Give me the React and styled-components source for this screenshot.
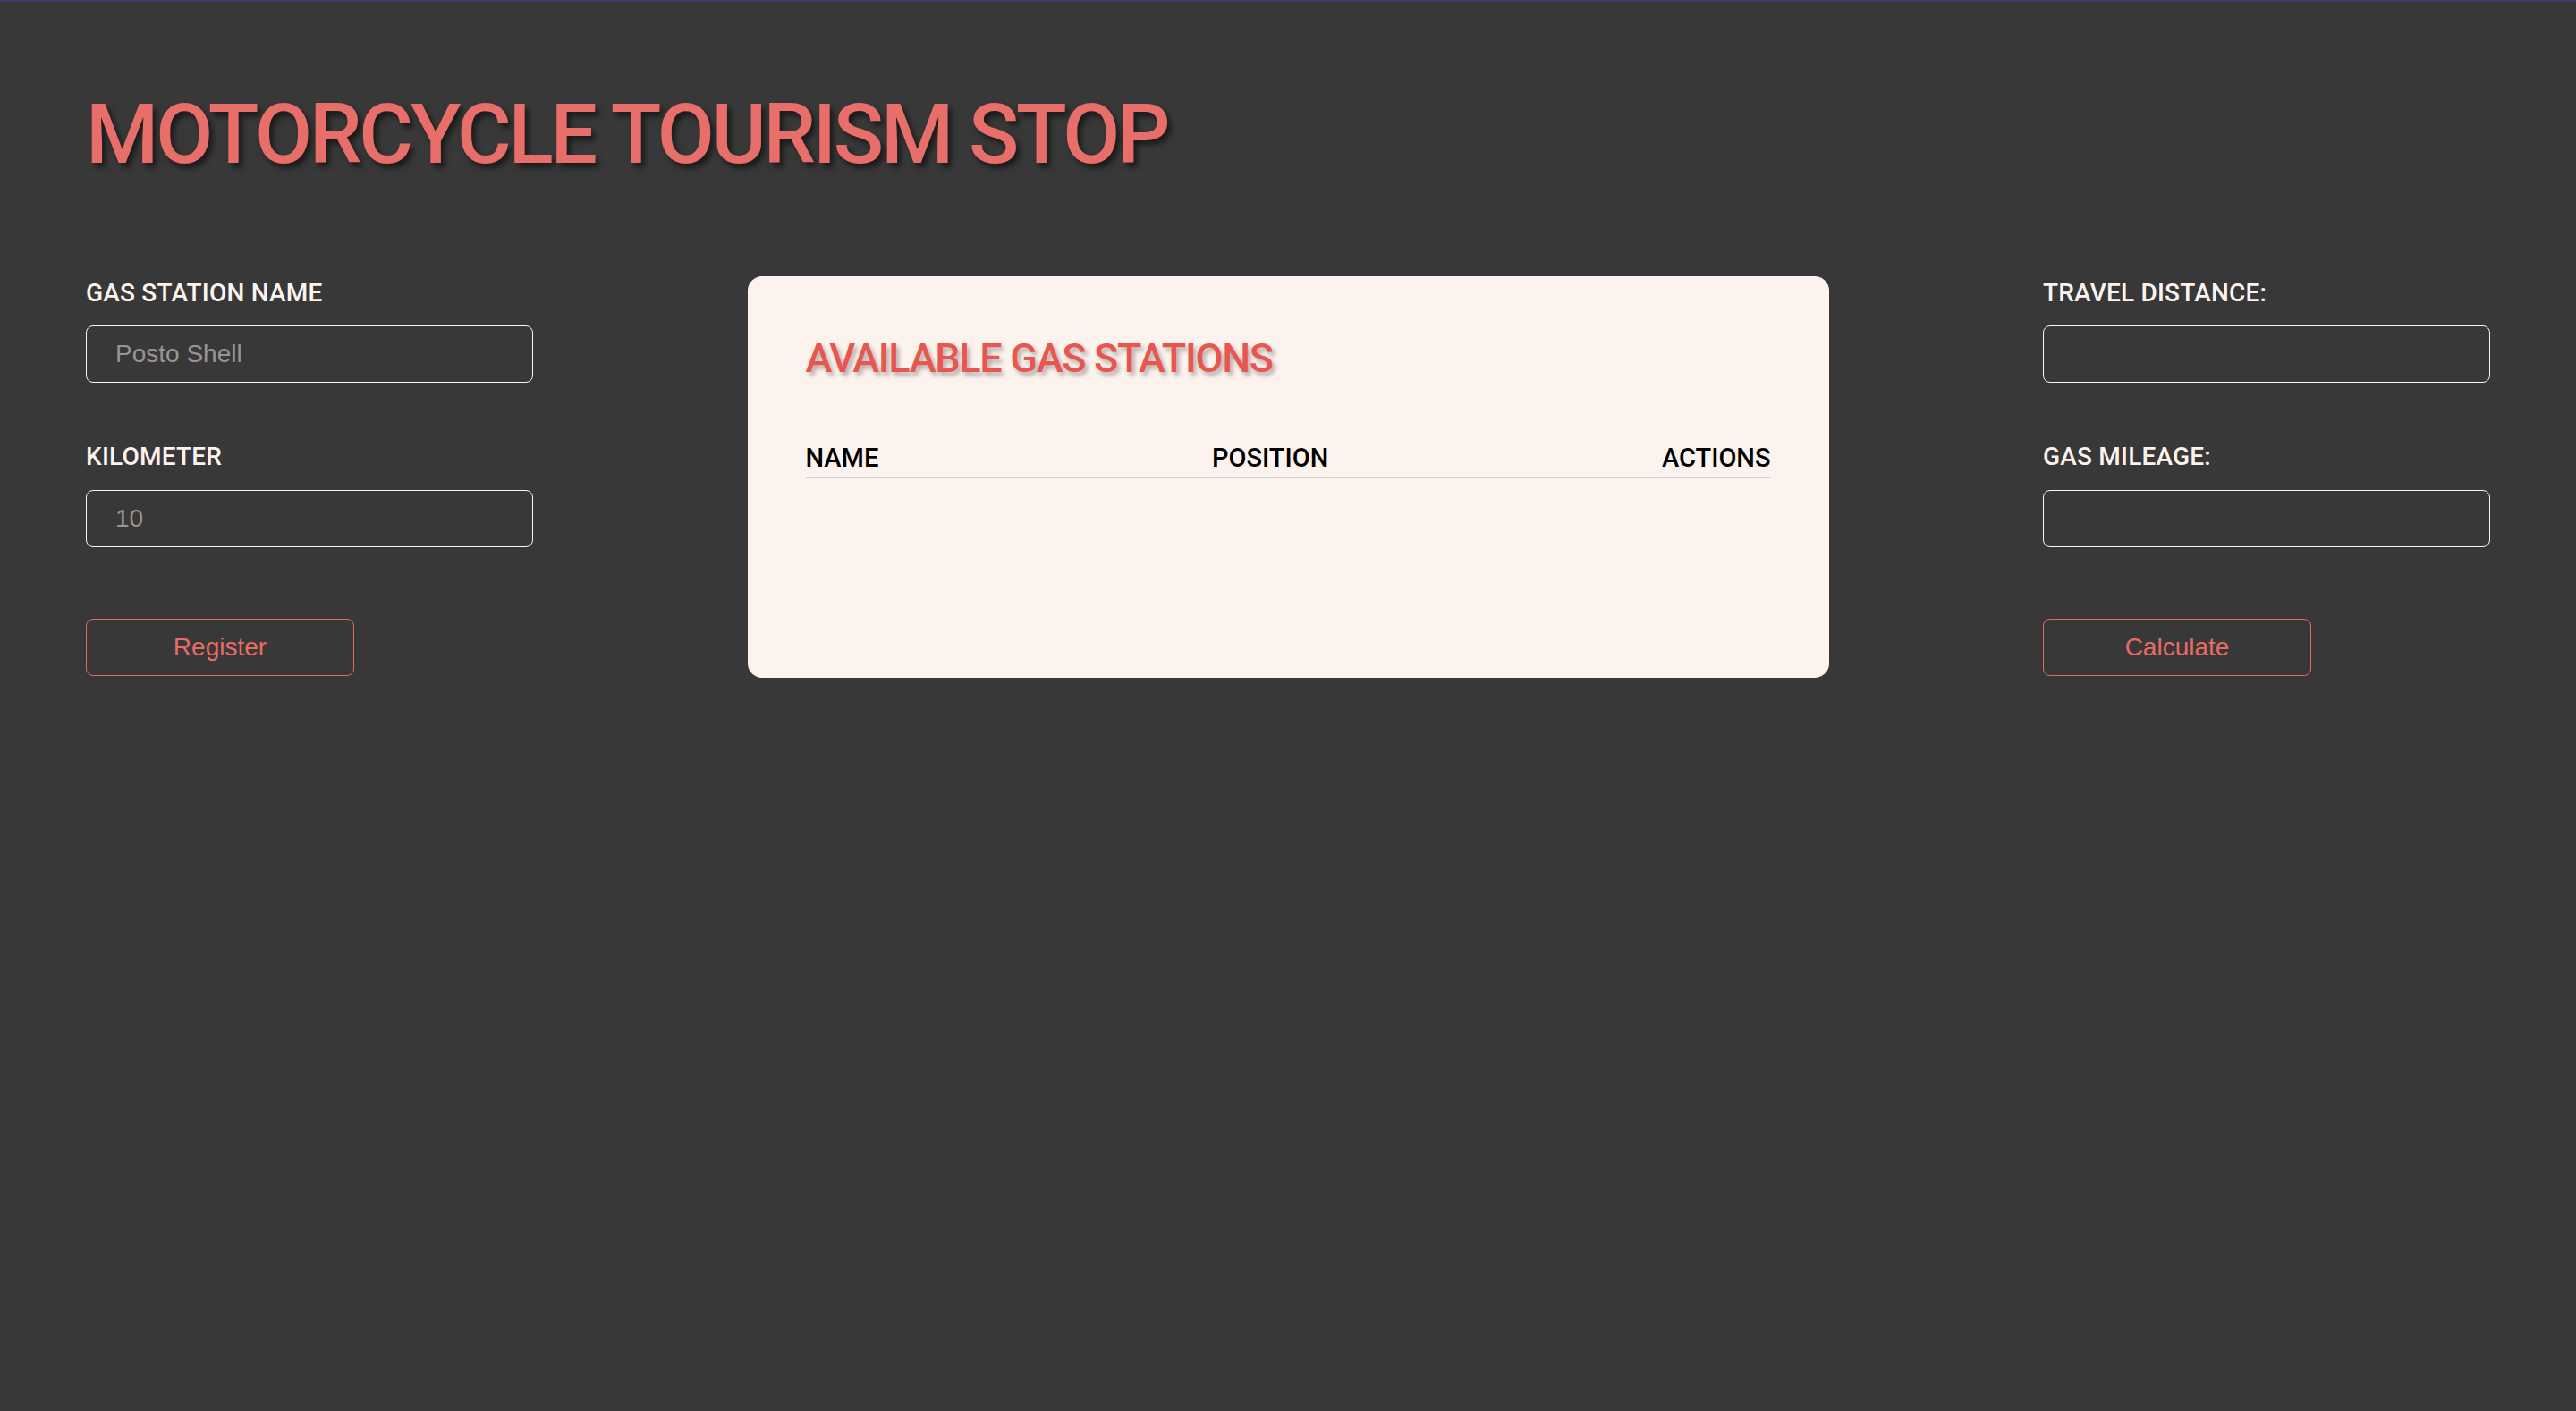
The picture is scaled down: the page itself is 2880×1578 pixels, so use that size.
import styled, { createGlobalStyle } from "styled-components";

const GlobalStyle = createGlobalStyle`
  * {
    box-sizing: border-box;
  }
  html, body {
    margin: 0;
    padding: 0;
    background-color: #383838;
  }
  body {
    min-height: 100vh;
    border-top: 2px solid #3f3a6e;
    font-family: Roboto, "Noto Sans", sans-serif;
  }
`;

export default function App() {
  return (
    <>
      <GlobalStyle />
      <Page>
        <Title>MOTORCYCLE TOURISM STOP</Title>
        <Row>
          <FormColumn>
            <Field>
              <Label>GAS STATION NAME</Label>
              <Input placeholder="Posto Shell" />
            </Field>
            <Field>
              <Label>KILOMETER</Label>
              <Input placeholder="10" />
            </Field>
            <OutlineButton>Register</OutlineButton>
          </FormColumn>

          <Card>
            <CardTitle>AVAILABLE GAS STATIONS</CardTitle>
            <TableHead>
              <span>NAME</span>
              <span>POSITION</span>
              <span>ACTIONS</span>
            </TableHead>
          </Card>

          <FormColumn>
            <Field>
              <Label>TRAVEL DISTANCE:</Label>
              <Input />
            </Field>
            <Field>
              <Label>GAS MILEAGE:</Label>
              <Input />
            </Field>
            <OutlineButton>Calculate</OutlineButton>
          </FormColumn>
        </Row>
      </Page>
    </>
  );
}

const Page = styled.div`
  padding: 93px 96px 0;
`;

const Title = styled.h1`
  margin: 0;
  font-size: 93px;
  font-weight: 500;
  line-height: 1.2;
  letter-spacing: -3.2px;
  color: #e86f69;
  text-shadow: 4px 5px 6px rgba(0, 0, 0, 0.55);
`;

const Row = styled.div`
  display: flex;
  justify-content: space-between;
  align-items: flex-start;
  margin-top: 102px;
`;

const FormColumn = styled.div`
  width: 500px;
  display: flex;
  flex-direction: column;
  padding-top: 2px;
`;

const Field = styled.div`
  display: flex;
  flex-direction: column;
  gap: 20px;
  margin-bottom: 66px;

  & + button {
    margin-top: 14px;
  }
`;

const Label = styled.label`
  font-size: 28px;
  line-height: 1.2;
  font-weight: 500;
  letter-spacing: 0.2px;
  color: #fcf3ef;
`;

const Input = styled.input`
  height: 64px;
  width: 100%;
  background: transparent;
  border: 1px solid #fcf3ef;
  border-radius: 8px;
  padding: 0 32px;
  font-family: "Liberation Sans", Arial, sans-serif;
  font-size: 28px;
  color: #fcf3ef;
  outline: none;

  &::placeholder {
    color: #9a9594;
  }
`;

const OutlineButton = styled.button`
  width: 300px;
  height: 64px;
  background: transparent;
  border: 1px solid #e06b64;
  border-radius: 8px;
  font-family: "Liberation Sans", Arial, sans-serif;
  font-size: 28px;
  color: #e86c65;
  cursor: pointer;
`;

const Card = styled.section`
  width: 1209px;
  min-height: 449px;
  background-color: #fcf3ef;
  border-radius: 16px;
  padding: 65px 65px 64px;
`;

const CardTitle = styled.h2`
  margin: 0 0 67px;
  font-size: 45px;
  font-weight: 500;
  line-height: 1.2;
  letter-spacing: -1.3px;
  color: #e8574f;
  text-shadow: 3px 4px 5px rgba(0, 0, 0, 0.3);
`;

const TableHead = styled.div`
  display: flex;
  justify-content: space-between;
  padding-bottom: 4px;
  border-bottom: 2px solid #d2d0cf;
  font-size: 29px;
  font-weight: 500;
  line-height: 1.2;
  color: #000;
`;
